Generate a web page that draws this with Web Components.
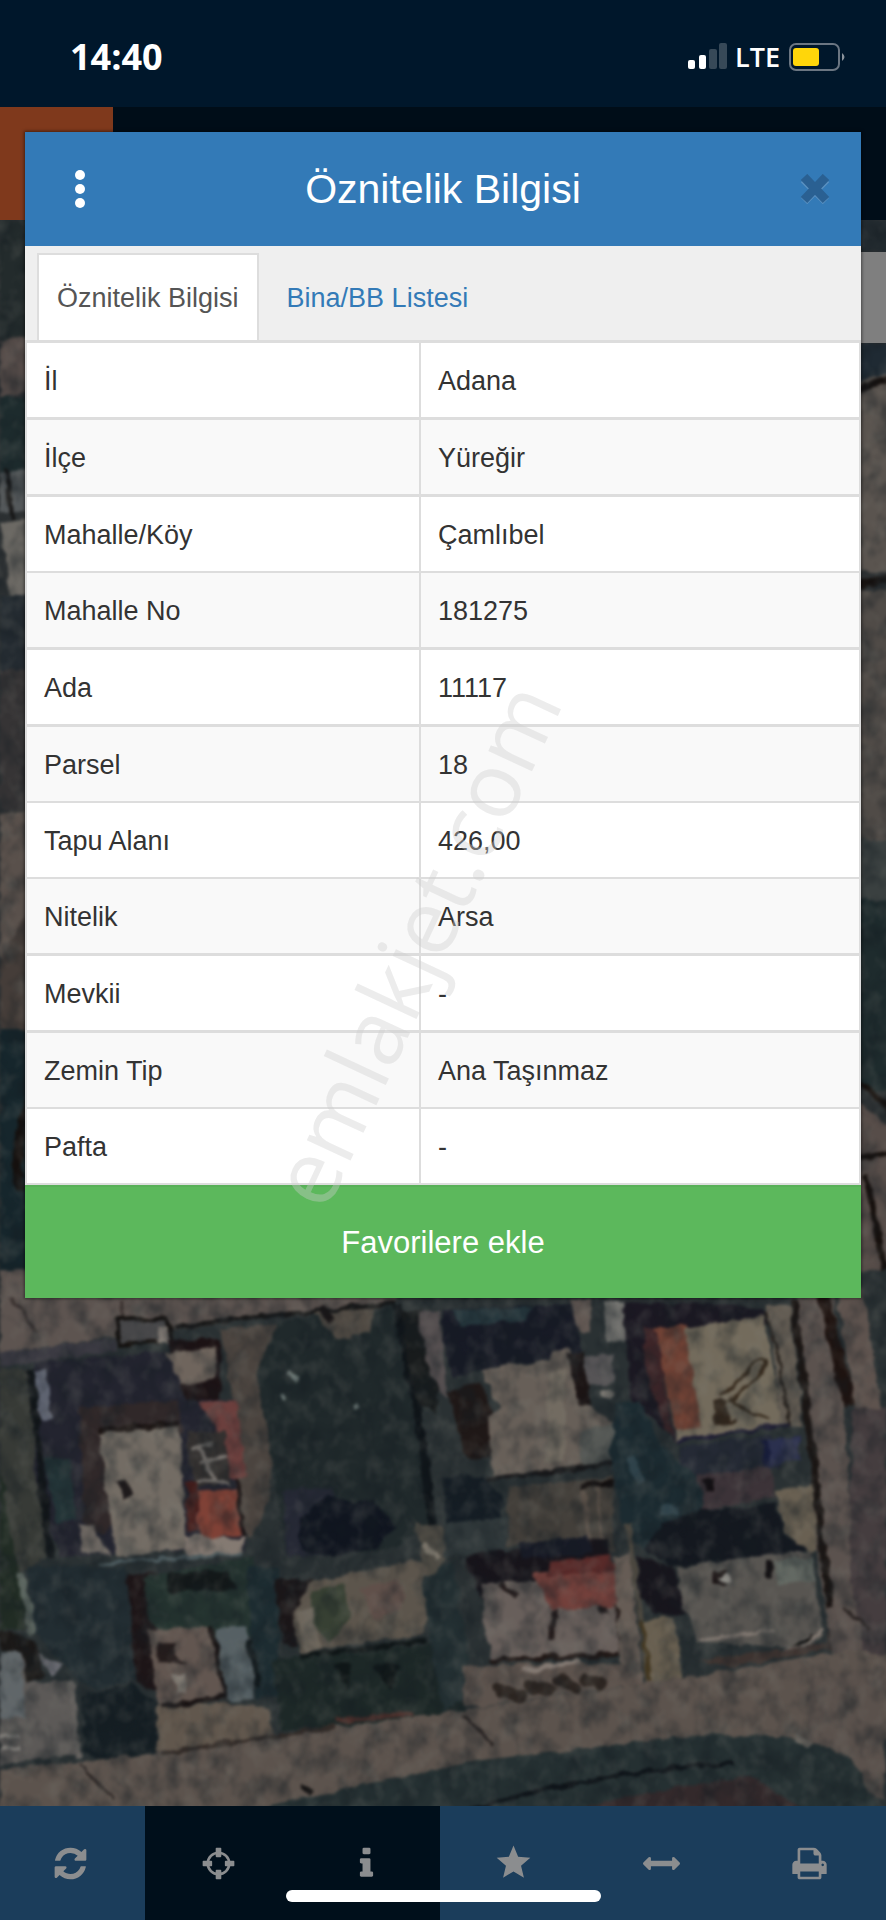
<!DOCTYPE html>
<html lang="tr">
<head>
<meta charset="utf-8">
<meta name="viewport" content="width=device-width, initial-scale=1">
<title>Öznitelik Bilgisi</title>
<style>
  body {
    margin: 0;
    background: #00172b;
    font-family: "Liberation Sans", Arial, sans-serif;
  }
</style>
</head>
<body>
<parcel-app>
  <status-bar slot="status" time="14:40" network="LTE"></status-bar>
  <satellite-map slot="map"></satellite-map>
  <tool-bar slot="tools"></tool-bar>
  <info-dialog slot="dialog" heading="Öznitelik Bilgisi" action="Favorilere ekle">
    <tab-strip slot="tabs"></tab-strip>
    <attribute-table></attribute-table>
  </info-dialog>
  <water-mark slot="dialog" text="emlakjet.com"></water-mark>
</parcel-app>

<script>
const ICONS = {
  refresh: '<path d="M1639 1056q0 5-1 7-64 268-268 434.500t-478 166.500q-146 0-282.500-55t-243.500-157l-129 129q-19 19-45 19t-45-19-19-45v-448q0-26 19-45t45-19h448q26 0 45 19t19 45-19 45l-137 137q71 66 161 102t187 36q134 0 250-65t186-179q11-17 53-117 8-23 30-23h192q13 0 22.500 9.500t9.500 22.500zm25-800v448q0 26-19 45t-45 19h-448q-26 0-45-19t-19-45 19-45l138-138q-148-137-349-137-134 0-250 65t-186 179q-11 17-53 117-8 23-30 23h-199q-13 0-22.500-9.500t-9.500-22.500v-7q65-268 270-434.500t480-166.500q146 0 284 55.500t245 156.500l130-129q19-19 45-19t45 19 19 45z"/>',
  crosshairs: '<circle cx="896" cy="896" r="520" fill="none" stroke="currentColor" stroke-width="130"/><path d="M800 128h192q40 0 40 40v380q0 40-40 40h-192q-40 0-40-40v-380q0-40 40-40zM800 1204h192q40 0 40 40v380q0 40-40 40h-192q-40 0-40-40v-380q0-40 40-40zM168 760h380q40 0 40 40v192q0 40-40 40h-380q-40 0-40-40v-192q0-40 40-40zM1244 760h380q40 0 40 40v192q0 40-40 40h-380q-40 0-40-40v-192q0-40 40-40z"/>',
  info: '<path d="M1216 1344v128q0 26-19 45t-45 19h-512q-26 0-45-19t-19-45v-128q0-26 19-45t45-19h64v-384h-64q-26 0-45-19t-19-45v-128q0-26 19-45t45-19h384q26 0 45 19t19 45v576h64q26 0 45 19t19 45zm-128-1152v192q0 26-19 45t-45 19h-256q-26 0-45-19t-19-45v-192q0-26 19-45t45-19h256q26 0 45 19t19 45z"/>',
  star: '<path d="M896 30l225 545 590 45-450 382 140 590-505-310-505 310 140-590-450-382 590-45z"/>',
  ruler: '<path d="M1792 896q0 26-19 45l-256 256q-19 19-45 19t-45-19-19-45v-128h-1024v128q0 26-19 45t-45 19-45-19l-256-256q-19-19-19-45t19-45l256-256q19-19 45-19t45 19 19 45v128h1024v-128q0-26 19-45t45-19 45 19l256 256q19 19 19 45z"/>',
  print: '<path d="M448 1536h896v-256h-896v256zm0-640h896v-384h-160q-40 0-68-28t-28-68v-160h-640v640zm1152 64q0-26-19-45t-45-19-45 19-19 45 19 45 45 19 45-19 19-45zm128 0v416q0 13-9.500 22.500t-22.500 9.500h-224v160q0 40-28 68t-68 28h-960q-40 0-68-28t-28-68v-160h-224q-13 0-22.500-9.500t-9.500-22.500v-416q0-79 56.500-135.500t135.500-56.500h64v-544q0-40 28-68t68-28h672q40 0 88 20t76 48l152 152q28 28 48 76t20 88v256h64q79 0 135.500 56.500t56.500 135.500z"/>'
}

class ParcelApp extends HTMLElement {
  constructor() {
    super()
    this.attachShadow({ mode: 'open' }).innerHTML = `
      <style>
        :host {
          display: grid;
          position: relative;
          grid-template-rows: 107px 113px 1fr 114px;
          min-height: 100vh;
          overflow: hidden;
        }
        .top { background: #000d18; }
        .brand { width: 113px; height: 100%; background: #7f391c; }
      </style>
      <slot name="status"></slot>
      <div class="top"><div class="brand"></div></div>
      <slot name="map"></slot>
      <slot name="tools"></slot>
      <slot name="dialog"></slot>
    `
  }
}

class StatusBar extends HTMLElement {
  connectedCallback() {
    this.attachShadow({ mode: 'open' }).innerHTML = `
      <style>
        :host {
          display: flex;
          align-items: center;
          justify-content: space-between;
          padding: 6px 40px 0 70px;
          color: #fff;
          background: #00172b;
          font-family: "Open Sans", "Noto Sans", sans-serif;
        }
        time { font-size: 36px; font-weight: 700; line-height: 48px; }
        .state { display: flex; align-items: center; gap: 8px; font-size: 27px; font-weight: 600; line-height: 40px; }
        svg { display: block; }
      </style>
      <time>${this.getAttribute('time')}</time>
      <div class="state">
        <svg width="40" height="28" viewBox="0 0 40 28">
          <rect x="1" y="17" width="7" height="9" rx="2" fill="#fff"/>
          <rect x="12" y="12" width="7" height="14" rx="2" fill="#fff"/>
          <rect x="22" y="6" width="8" height="20" rx="2" fill="#374958"/>
          <rect x="32" y="0" width="8" height="26" rx="2" fill="#374958"/>
        </svg>
        <span>${this.getAttribute('network')}</span>
        <svg width="58" height="28" viewBox="0 0 58 28">
          <rect x="2" y="1" width="49" height="26" rx="6" fill="none" stroke="#6b7682" stroke-width="2"/>
          <rect x="5" y="5" width="26" height="18" rx="3" fill="#ffd60a"/>
          <path d="M54 10q5 4 0 8z" fill="#8a939c"/>
        </svg>
      </div>
    `
  }
}

class SatelliteMap extends HTMLElement {
  constructor() {
    super()
    this.attachShadow({ mode: 'open' }).innerHTML = `
      <style>
        :host {
          display: grid;
          background: #3a3735;
          overflow: hidden;
          min-height: 0;
        }
        svg, .panel { grid-area: 1 / 1; }
        svg { width: 100%; height: 100%; min-height: 0; display: block; }
        .panel { justify-self: end; width: 60px; height: 91px; margin-top: 32px; background: #7f7f7f; }
      </style>
      <svg viewBox="0 220 886 1586" preserveAspectRatio="xMidYMax slice" aria-hidden="true">
        <defs>
          <filter id="rough" x="0" y="0" width="100%" height="100%" color-interpolation-filters="sRGB">
            <feTurbulence type="fractalNoise" baseFrequency=".07" numOctaves="2" seed="4" result="n"/>
            <feDisplacementMap in="SourceGraphic" in2="n" scale="9" xChannelSelector="R" yChannelSelector="G"/>
            <feGaussianBlur stdDeviation="1.4"/>
          </filter>
          <filter id="grain" x="0" y="0" width="100%" height="100%" color-interpolation-filters="sRGB">
            <feTurbulence type="fractalNoise" baseFrequency=".05 .04" numOctaves="3" seed="11"/>
            <feColorMatrix values="0 0 0 0 .08  0 0 0 0 .11  0 0 0 0 .13  2.4 0 0 0 -1"/>
            <feGaussianBlur stdDeviation="1"/>
          </filter>
          <filter id="light" x="0" y="0" width="100%" height="100%" color-interpolation-filters="sRGB">
            <feTurbulence type="fractalNoise" baseFrequency=".06 .05" numOctaves="3" seed="23"/>
            <feColorMatrix values="0 0 0 0 .5  0 0 0 0 .5  0 0 0 0 .47  0 2.4 0 0 -1.1"/>
            <feGaussianBlur stdDeviation="1"/>
          </filter>
        </defs>
        <g filter="url(#rough)">
          <rect x="-20" y="200" width="926" height="1640" fill="#2c3032"/>
          <!-- left edge of the map -->
          <path d="M0 220h40v120H0z" fill="#232b2c"/>
          <path d="M0 340l40-4v52l-40 8z" fill="#564c49"/>
          <path d="M0 396h40v78H0z" fill="#1d2b2d"/>
          <path d="M0 472l40-3v44H0z" fill="#54585a"/>
          <path d="M8 468l4 50" stroke="#141313" stroke-width="4"/>
          <path d="M0 521l40-5v80l-30 2z" fill="#6b6863"/>
          <path d="M0 596h40v80H0z" fill="#242b31"/>
          <path d="M0 670h40v140H0z" fill="#363435"/>
          <path d="M0 814l40-6v90l-40 80z" fill="#59504b"/>
          <path d="M0 960l40-70v150H0z" fill="#453d39"/>
          <path d="M0 1030h40v240H0z" fill="#16262c"/>
          <path d="M30 1100q-18 50-10 90" stroke="#15100e" stroke-width="10" fill="none"/>
          <!-- right edge of the map -->
          <path d="M850 220h40v32h-40z" fill="#232b30"/>
          <path d="M850 343h40v40h-40z" fill="#1f2a33"/>
          <path d="M850 384l40-12v200h-40z" fill="#5a544f"/>
          <path d="M850 392l40-14M850 586l40-8" stroke="#15100e" stroke-width="8"/>
          <path d="M850 590h40v250h-40z" fill="#504b47"/>
          <path d="M850 840h40v60h-40z" fill="#3a4040"/>
          <path d="M850 900h40v190h-40z" fill="#1e2b2d"/>
          <path d="M850 1096l40 30v200h-40z" fill="#574d49"/>
          <path d="M850 1080q30 10 40 34M850 1160l40-8M866 1176l24 120" stroke="#16100d" stroke-width="6" fill="none"/>

          <g transform="translate(0 1290) scale(.33333)">
            <!-- ground -->
            <path d="M0-60h2700v1700H0z" fill="#2a3133"/>
            <path d="M0-60H1190V36L350 140 0 190z" fill="#5d5450"/>
            <path d="M30 20l80 110M365 30l4 60" stroke="#3a3230" stroke-width="10"/>
            <path d="M0 190L350 145v40L0 225z" fill="#3b3a42"/>
            <path d="M520 110L1190 36" stroke="#171717" stroke-width="14"/>
            <path d="M0 230l100 10 40 560L60 850 0 820z" fill="#373a36"/>
            <path d="M0 520l50 300 30 200H0z" fill="#212c24"/>
            <path d="M60 850l40 180" stroke="#5c6660" stroke-width="26"/>
            <!-- courtyard of the big left house -->
            <path d="M100 215L520 185 620 330 700 330 740 780 180 800 100 540z" fill="#23242f"/>
            <path d="M95 245l40-8 22 150-38 4z" fill="#5e6370"/>
            <path d="M90 240l60 560" stroke="#111518" stroke-width="22"/>
            <path d="M240 350l290-20 20 100-240 300-60-40z" fill="#302829"/>
            <path d="M130 500l80 10 20 180-60 10z" fill="#233437"/>
            <path d="M350 90l150-8 20 70-160 10z" fill="#474749" stroke="#14110f" stroke-width="12"/>
            <path d="M475 110l35 2-4 50-34-4z" fill="#817a74"/>
            <path d="M500 150h160v180H560z" fill="#1c1214"/>
            <path d="M495 190l150-24 5 100-105 20z" fill="#6f655d"/>
            <path d="M660 120l170-20-10 240-10 280-60 130-30-60-20-360z" fill="#4b443f"/>
            <!-- left house roof -->
            <path d="M298 425l240-20 20 375-210 22z" fill="#736c64"/>
            <path d="M298 422l240-22" stroke="#17100f" stroke-width="18"/>
            <path d="M350 570l30-4 14 50-28 14z" fill="#1e1a1b"/>
            <path d="M595 335l112-4 30 225-50 10-40-150z" fill="#6b3f3d"/>
            <path d="M560 430l110-10 24 160-110 14z" fill="#33302f"/>
            <path d="M580 470l60-10M600 520l80-20M590 570l100 10M600 470l40 100" stroke="#77726e" stroke-width="12"/>
            <path d="M556 570l35 0 5 150-30 5z" fill="#451d1b"/>
            <path d="M592 605l124-10 4 140-120 14z" fill="#7f4136"/>
            <path d="M555 735l160 12 20-20-6 66-168 14z" fill="#857a72"/>
            <path d="M710 560l20 180" stroke="#1a1313" stroke-width="12"/>
            <path d="M234 700l50 4 20 50 30 40-90-4z" fill="#716a64"/>
            <path d="M300 820l430-30" stroke="#4b595d" stroke-width="10"/>
            <!-- lawn -->
            <path d="M840 90L1190 50 1250 330 1285 700 1180 780 860 800 830 600 770 250z" fill="#20292b"/>
            <path d="M850 600l150-10 30 200-170 10z" fill="#262935"/>
            <path d="M900 690l80-80 80 30 60-10 70 80-60 60-130 30-100-20z" fill="#10151f"/>
            <path d="M940 70l180-20-10 80-100 20z" fill="#514b44"/>
            <path d="M960 60l40 30" stroke="#191516" stroke-width="24"/>
            <path d="M1190 40l60 300 50 380" stroke="#0f1418" stroke-width="26" fill="none"/>
            <path d="M1200 60h60l70 160-20 150-60-30z" fill="#181b1c"/>
            <path d="M860 250l30 20M1065 340l8 14M840 310l14 20" stroke="#6a7674" stroke-width="14"/>
            <!-- lower left gardens -->
            <path d="M80 830l300 0 30 340-130 30-80-60-90-110z" fill="#222d32"/>
            <path d="M380 850l90 0 0 350-60-20z" fill="#1d1517"/>
            <path d="M430 860l330-60 50 240-300 0-60-40z" fill="#253430"/>
            <path d="M500 850l180-10 30 60-200 10z" fill="#131819"/>
            <path d="M0 1085l70 5 20 90 110-10 40 220L0 1425z" fill="#5c5957"/>
            <path d="M0 1085l62 5 14 190-76 5z" fill="#606669"/>
            <path d="M0 1020l110 30 20 110-50 20-15-90-65-10z" fill="#1a1817"/>
            <path d="M110 1090l80 40-40 30z" fill="#77777e"/>
            <path d="M210 1170l30 230" stroke="#65625f" stroke-width="18"/>
            <path d="M0 1340l60 0M0 1380l60-6" stroke="#898580" stroke-width="14"/>
            <path d="M245 1220l150-40 80 60 0 150-130 40-90-40z" fill="#151e23"/>
            <path d="M445 1020l180-10 60 220-210 20z" fill="#625650"/>
            <path d="M470 1060l60 0-10 40 40 20-90 0z" fill="#241c1c"/>
            <path d="M520 1150l40 0 0 60-30 0z" fill="#827c74"/>
            <path d="M630 1010l54 210-204 30" stroke="#191313" stroke-width="16" fill="none"/>
            <path d="M645 1015l100-8 20 220-80 5z" fill="#566064"/>
            <path d="M740 830l100 0 0 380-70 20z" fill="#1d2c31"/>
            <path d="M750 1050l24 140" stroke="#11181b" stroke-width="20"/>
            <path d="M470 1250l230-10 110 20 10 80-350 50z" fill="#61574d"/>
            <!-- centre ruin -->
            <path d="M820 870l120 0-50 200-40-10z" fill="#1b1618"/>
            <path d="M930 880l300-70 90 10-50 210-370 60-20-130z" fill="#5c554c"/>
            <path d="M930 900l100-20 20 100-60 80-60-60z" fill="#374033"/>
            <path d="M890 960l50-4 20 120-50 10z" fill="#6d665c"/>
            <path d="M1080 890l120-20 10 80-90 40z" fill="#60504a"/>
            <path d="M1240 700l90 10 10 100-50 60z" fill="#4d4a43"/>
            <path d="M1265 760l50 50" stroke="#7d776c" stroke-width="16"/>
            <path d="M900 1100l380-50" stroke="#0f1516" stroke-width="16"/>
            <path d="M820 1110l520-50 60 220-560 40z" fill="#1d2827"/>
            <path d="M1000 1120l60 0-20 80zM1120 1130l80-10-30 80z" fill="#0f1617"/>
            <path d="M1270 870l90-60 60 400-90 60-40-200z" fill="#232f32"/>
            <!-- centre right house -->
            <path d="M1329 60l400-20 10 150-300 50-80 20-30-110z" fill="#171a25"/>
            <path d="M1250 70l70-10 20 270-50-80z" fill="#554f50"/>
            <path d="M1360 60l240-10-30 40-190 20z" fill="#25363c"/>
            <path d="M1340 310l100-40 50 120-20 110-70 10z" fill="#1f1817"/>
            <path d="M1442 240l200-30 10-30 60-5 40 170 90 50 5 120-370 60-10-200 30-20z" fill="#675f58"/>
            <path d="M1645 240l50 0 0 280-60 0z" fill="#726b61"/>
            <path d="M1740 420l110-20 4 120-110 10z" fill="#555855"/>
            <path d="M1460 572l400-54" stroke="#171719" stroke-width="14"/>
            <path d="M1700 190l50-10 20 170-30 0z" fill="#1b1414"/>
            <path d="M1750 200l90-10 0 90-80 10z" fill="#565456"/>
            <path d="M1710 30l60 0 0 100-30 0z" fill="#625853"/>
            <path d="M1810 30l60 10 10 110-60 10z" fill="#7b7a76"/>
            <path d="M1800 310a22 16 0 1 0 44 0 22 16 0 1 0-44 0" fill="#7b7872"/>
            <path d="M1530 590l310-30 0 220-80 10-20-50-220 30z" fill="#433f3a"/>
            <path d="M1750 590l20 190M1790 590l20 180" stroke="#5a5048" stroke-width="12"/>
            <path d="M1740 588l100-8" stroke="#120e0e" stroke-width="18"/>
            <path d="M1329 560l120 0 70 80-30 60-150 10z" fill="#151d24"/>
            <path d="M1340 700l180-20 0 100-190 20z" fill="#30383a"/>
            <!-- top right house -->
            <path d="M1870 40l240 0 180 20 20 40-340 80 60 280-140-140z" fill="#1b1822"/>
            <path d="M1960 115l100-8 45 310-72 30z" fill="#704235"/>
            <path d="M1930 110l40 10 50 320-20-10-60-180z" fill="#3d2528"/>
            <path d="M2052 115l240-38 60 330-325 45-2-30 80-10z" fill="#736b5c"/>
            <path d="M2300 50l70 0 40 360-60 0z" fill="#625b52"/>
            <path d="M2300 70l30 110 40 230" stroke="#26201b" stroke-width="8" fill="none"/>
            <path d="M2165 320l110-110q20-8 22 12l-8 20-100 90 110 60" stroke="#35291c" stroke-width="9" fill="none"/>
            <path d="M2140 330l40 0 10 60 20-10-4 20-60 6z" fill="#31261c"/>
            <path d="M2030 452l340-48" stroke="#1c1b31" stroke-width="10"/>
            <path d="M2040 470l280-40 20 100-290 60z" fill="#252a35"/>
            <path d="M2290 450l110-10 0 70-90 20z" fill="#2b304e"/>
            <path d="M2290 450l15 80" stroke="#181d3a" stroke-width="20"/>
            <path d="M2060 560l250-30 20 90-270 50z" fill="#3c3338"/>
            <path d="M2110 570l30 0 0 30-30 4z" fill="#120e11"/>
            <!-- trees and shadow between the houses -->
            <path d="M1850 340l70-10 50 120 120 110 20 80-60 120-110 30-80-100-30-200z" fill="#1c2b31"/>
            <path d="M1890 500l30 80M1980 660l50 0M2040 720l60-10" stroke="#2f424a" stroke-width="26"/>
            <path d="M2100 660l230-20 20 90 80 50-90 20-320 30-90-50 60-80z" fill="#14181f"/>
            <path d="M2330 600l120-20 20 200-40 10-80-70z" fill="#696052"/>
            <path d="M1885 700l40 300 20 190" stroke="#4b473f" stroke-width="16" fill="none"/>
            <!-- lower middle house -->
            <path d="M1390 800l430-60 10 120-360 120z" fill="#17141a"/>
            <path d="M1560 760l200-20 20 50-220 20z" fill="#171a25"/>
            <path d="M1445 880l190-10 210 30 30 190-390 30-30-90z" fill="#685f5b"/>
            <path d="M1605 850l240-30 14 130-200 10-30-40z" fill="#73403b"/>
            <path d="M1650 815l180-20 14 50-200 10z" fill="#582a29"/>
            <path d="M1650 970h24M1656 970v80M1500 880l50 40M1800 960l26-4" stroke="#231b1b" stroke-width="16"/>
            <path d="M1470 1112l400-20-20-150" stroke="#211816" stroke-width="14" fill="none"/>
            <path d="M1840 800l50-10 40 390-60 10z" fill="#665c55"/>
            <path d="M1390 1130l240-10 240 0 60 60-480 70-60 0z" fill="#5d534d"/>
            <path d="M1500 1200l60 20M1590 1190l60 10M1680 1170l40 20M1760 1170l40 10" stroke="#2c2521" stroke-width="40" stroke-linecap="round"/>
            <path d="M1930 990l95-6 20 190-100 10z" fill="#685f50"/>
            <path d="M1925 990l24 190" stroke="#42361f" stroke-width="12"/>
            <path d="M1570 1140l170-22" stroke="#847a73" stroke-width="16"/>
            <!-- lower right house -->
            <path d="M1910 800l110 30 40 140-80 10-60-60z" fill="#17151c"/>
            <path d="M2030 835l270-40 130-10 40 250-50 40-330-20-40-110z" fill="#585551"/>
            <path d="M2325 810l110-10 10 70-110 14z" fill="#626862"/>
            <path d="M2140 840l40 0 0 50-40-10z" fill="#1e1717"/>
            <circle cx="2178" cy="862" r="14" fill="#96948e"/>
            <path d="M2305 810v50" stroke="#151315" stroke-width="26"/>
            <path d="M2100 1050l220-26M2360 1080l50-10 60-60" stroke="#817871" stroke-width="12"/>
            <path d="M2180 1130l370-60 0-140-60 0-10 130-380 50z" fill="#3d3330"/>
            <!-- right hand roads -->
            <path d="M2390 0l110 0 60 700 40 250 60 500h-110l-90-600z" fill="#5b524e"/>
            <path d="M2380 30l50 400 60 520" stroke="#1b1614" stroke-width="22" fill="none"/>
            <path d="M2470 20l80 330" stroke="#1e1310" stroke-width="36"/>
            <path d="M2510 0h80l60 400h-80z" fill="#5e534e"/>
            <path d="M2560 350l100 0v1000l-60-200-50-300z" fill="#453d3f"/>
            <!-- street across the bottom -->
            <path d="M0 1440L470 1390 1010 1310 1400 1260 2000 1170 2560 1080 2700 1100v240l-260 0-700 50-740 150-1000 60z" fill="#5c534d"/>
            <path d="M2420 1160l230-30v400l-230-130z" fill="#5a514c"/>
            <path d="M480 1390l530-80" stroke="#342c28" stroke-width="12"/>
            <path d="M240 1420l100 110M1390 1270l90 90M2530 950l80 70" stroke="#2a2423" stroke-width="9"/>
            <path d="M1010 1290l230-20" stroke="#4c2f2b" stroke-width="14"/>
            <path d="M900 1490l30 16" stroke="#151414" stroke-width="20"/>
            <path d="M700 1570l500-110 250-50 700-80 260 20 150 60 80 160z" fill="#253032"/>
            <path d="M1410 1560q340-110 790-140" stroke="#0e1318" stroke-width="14" fill="none"/>
            <path d="M1700 1570q200-70 560-110l160 110z" fill="#33292b"/>
            <path d="M2390 1340l40 30" stroke="#69655f" stroke-width="26"/>
          </g>
        </g>
        <rect x="-20" y="200" width="926" height="1640" filter="url(#grain)" opacity=".45"/>
        <rect x="-20" y="200" width="926" height="1640" filter="url(#light)" opacity=".22"/>
      </svg>
      <div class="panel"></div>
    `
  }
}

class ToolBar extends HTMLElement {
  connectedCallback() {
    const tools = [
      ['refresh', 'Yenile'],
      ['crosshairs', 'Konum', 'dark'],
      ['info', 'Bilgi', 'dark'],
      ['star', 'Favoriler'],
      ['ruler', 'Ölçüm'],
      ['print', 'Yazdır']
    ]
    const buttons = tools.map(([icon, label, kind]) => `
      <button class="${kind || ''}" aria-label="${label}">
        <svg viewBox="0 0 1792 1792" fill="currentColor">${ICONS[icon]}</svg>
      </button>
    `).join('')

    this.attachShadow({ mode: 'open' }).innerHTML = `
      <style>
        :host {
          display: grid;
          position: relative;
          grid-template-columns: repeat(6, 1fr);
          margin-left: -3px;
          padding-right: 3px;
          background: #1b3d5b;
        }
        button {
          display: grid;
          place-items: center;
          border: 0;
          padding: 0;
          color: #8b8d8f;
          background: #1b3d5b;
        }
        .dark { background: #000f1b; }
        svg { width: 37px; height: 37px; }
        .home {
          position: absolute;
          left: 50%;
          bottom: 18px;
          width: 315px;
          height: 12px;
          margin-left: -156px;
          border-radius: 6px;
          background: #fff;
        }
      </style>
      ${buttons}
      <div class="home"></div>
    `
  }
}

class InfoDialog extends HTMLElement {
  connectedCallback() {
    this.attachShadow({ mode: 'open' }).innerHTML = `
      <style>
        :host {
          display: flex;
          flex-direction: column;
          position: absolute;
          top: 132px;
          left: 25px;
          right: 25px;
          background: #fff;
          box-shadow: 0 0 3px 1px rgba(0, 0, 0, .45);
        }
        header {
          display: grid;
          grid-template-columns: 78px 1fr 78px;
          align-items: center;
          padding: 0 16px;
          height: 114px;
          color: #fff;
          background: #337ab7;
        }
        h1 { margin: 0; font-size: 41px; font-weight: 400; line-height: 48px; text-align: center; }
        header button { display: grid; place-items: center; justify-self: center; width: 60px; height: 60px; border: 0; padding: 0; background: none; }
        header .close { justify-self: end; color: #2a6092; }
        .action {
          height: 113px;
          border: 0;
          border-top: 2px solid #58b058;
          padding: 0;
          color: #fff;
          background: #5cb85c;
          font: 31px/40px "Liberation Sans", Arial, sans-serif;
        }
      </style>
      <header>
        <button aria-label="Menü">
          <svg width="12" height="38" viewBox="0 0 12 38" fill="#fff"><circle cx="6" cy="5" r="5"/><circle cx="6" cy="19" r="5"/><circle cx="6" cy="33" r="5"/></svg>
        </button>
        <h1>${this.getAttribute('heading')}</h1>
        <button class="close" aria-label="Kapat">
          <svg width="30" height="30" viewBox="0 0 30 30" fill="none" stroke-width="9">
            <path d="M4 5L26 27M26 5L4 27" stroke="#5a90c0"/>
            <path d="M4 3L26 26M26 3L4 26" stroke="currentColor"/>
          </svg>
        </button>
      </header>
      <slot name="tabs"></slot>
      <slot></slot>
      <button class="action">${this.getAttribute('action')}</button>
    `
  }
}

class TabStrip extends HTMLElement {
  constructor() {
    super()
    this.attachShadow({ mode: 'open' }).innerHTML = `
      <style>
        :host {
          display: flex;
          padding: 7px 12px 0;
          border-bottom: 3px solid #ddd;
          background: #efefef;
        }
        button {
          height: 87px;
          border: 2px solid transparent;
          border-bottom: 0;
          padding: 0 18px;
          color: #337ab7;
          background: none;
          font: 27px/36px "Liberation Sans", Arial, sans-serif;
        }
        .active { margin-right: 8px; border-color: #ddd; color: #555; background: #fff; }
      </style>
      <button class="active">Öznitelik Bilgisi</button>
      <button>Bina/BB Listesi</button>
    `
  }
}

class AttributeTable extends HTMLElement {
  connectedCallback() {
    const rows = [
      ['İl', 'Adana'],
      ['İlçe', 'Yüreğir'],
      ['Mahalle/Köy', 'Çamlıbel'],
      ['Mahalle No', '181275'],
      ['Ada', '11117'],
      ['Parsel', '18'],
      ['Tapu Alanı', '426,00'],
      ['Nitelik', 'Arsa'],
      ['Mevkii', '-'],
      ['Zemin Tip', 'Ana Taşınmaz'],
      ['Pafta', '-']
    ]
    this.attachShadow({ mode: 'open' }).innerHTML = `
      <style>
        :host { display: block; }
        table {
          width: 100%;
          border: solid #ddd;
          border-width: 0 2px;
          border-spacing: 0;
          table-layout: fixed;
          color: #333;
          font-size: 27px;
          line-height: 36px;
        }
        th, td {
          padding: 20px 17px 18px;
          border-bottom: 3px solid #ddd;
          text-align: left;
          font-weight: 400;
        }
        th { width: 358px; border-right: 2px solid #ddd; }
        tr:nth-child(even) { background: #f9f9f9; }
        tr:nth-child(3) > *, tr:nth-child(6) > *, tr:nth-child(7) > *, tr:nth-child(10) > * { border-bottom-width: 2px; }
        tr:last-child > * { border-bottom-width: 2px; }
      </style>
      <table>
        ${rows.map(([name, value]) => `<tr><th scope="row">${name}</th><td>${value}</td></tr>`).join('')}
      </table>
    `
  }
}

class WaterMark extends HTMLElement {
  connectedCallback() {
    this.attachShadow({ mode: 'open' }).innerHTML = `
      <style>
        :host {
          display: block;
          position: absolute;
          top: 680px;
          left: 50%;
          width: 400px;
          margin-left: -200px;
          pointer-events: none;
        }
        svg { display: block; width: 100%; overflow: visible; }
        text { font: 90px "Open Sans", "Noto Sans", sans-serif; fill: #cdcdcd; fill-opacity: .38; }
      </style>
      <svg viewBox="0 0 400 560">
        <text transform="translate(202 278) rotate(-65)" text-anchor="middle">${this.getAttribute('text')}</text>
      </svg>
    `
  }
}

customElements.define('parcel-app', ParcelApp)
customElements.define('status-bar', StatusBar)
customElements.define('satellite-map', SatelliteMap)
customElements.define('tool-bar', ToolBar)
customElements.define('info-dialog', InfoDialog)
customElements.define('tab-strip', TabStrip)
customElements.define('attribute-table', AttributeTable)
customElements.define('water-mark', WaterMark)
</script>
</body>
</html>
